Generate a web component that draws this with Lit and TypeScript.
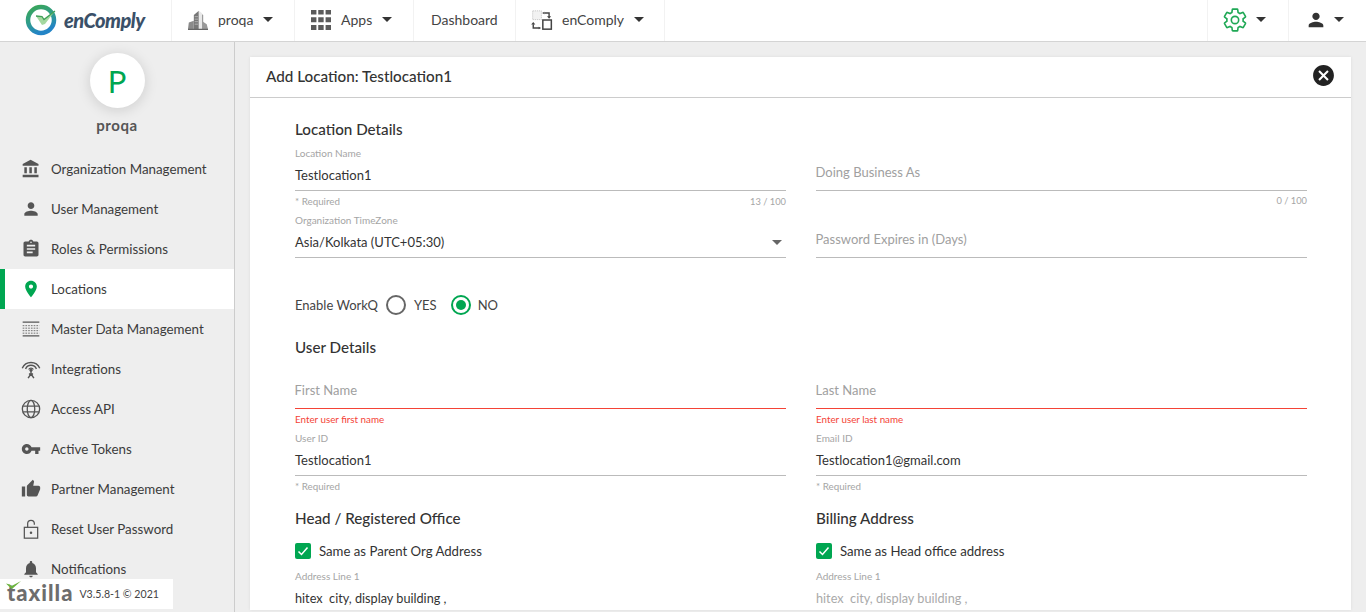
import { LitElement, html, css, svg } from "lit";
import { customElement } from "lit/decorators.js";
import { classMap } from "lit/directives/class-map.js";

const icon = (d: unknown, size = 20, vb = "0 0 24 24") =>
  html`<svg width=${size} height=${size} viewBox=${vb} fill="currentColor">${d}</svg>`;

const paths: Record<string, unknown> = {
  bank: svg`<path d="M4 10v7h3v-7H4zm6 0v7h3v-7h-3zM2 22h19v-3H2v3zm14-12v7h3v-7h-3zm-4.500-9L2 6v2h19V6l-9.500-5z"/>`,
  person: svg`<path d="M12 12c2.210 0 4-1.790 4-4s-1.790-4-4-4-4 1.790-4 4 1.790 4 4 4zm0 2c-2.670 0-8 1.340-8 4v2h16v-2c0-2.660-5.330-4-8-4z"/>`,
  roles: svg`<path d="M19 3h-4.180C14.400 1.840 13.300 1 12 1c-1.300 0-2.400.840-2.820 2H5c-1.100 0-2 .900-2 2v14c0 1.100.900 2 2 2h14c1.100 0 2-.900 2-2V5c0-1.100-.900-2-2-2zm-7 0c.550 0 1 .450 1 1s-.450 1-1 1-1-.450-1-1 .450-1 1-1zm2 14H7v-2h7v2zm3-4H7v-2h10v2zm0-4H7V7h10v2z"/>`,
  place: svg`<path d="M12 2C8.130 2 5 5.130 5 9c0 5.250 7 13 7 13s7-7.750 7-13c0-3.870-3.130-7-7-7zm0 9.500c-1.380 0-2.500-1.120-2.500-2.500s1.120-2.500 2.500-2.500 2.500 1.120 2.500 2.500-1.120 2.500-2.500 2.500z"/>`,
  master: svg`<path d="M2 3h20v1.400H2zM2 19.600h20V21H2z"/><path d="M2 8h20M2 11h20M2 14h20M2 17h20" stroke="currentColor" stroke-width="1.200" stroke-dasharray="2 1.300" fill="none" opacity="0.800"/>`,
  signal: svg`<g fill="none" stroke="currentColor" stroke-width="1.700"><path d="M1.500 11a11.500 11.500 0 0 1 21 0"/><path d="M5.500 12a7 7 0 0 1 13 0"/><path d="M9.200 12.600a3.200 3.200 0 0 1 5.600 0"/><path d="M12 14v4.500M12 18l-3.500 5M12 18l3.500 5M9.500 18h5"/></g><circle cx="12" cy="13.500" r="1.800"/>`,
  globe: svg`<g fill="none" stroke="currentColor" stroke-width="1.600"><circle cx="12" cy="12" r="10.400"/><ellipse cx="12" cy="12" rx="4.500" ry="10.400"/><path d="M2.500 8.600h19M2.500 15.400h19"/></g>`,
  key: svg`<path d="M12.650 10C11.830 7.670 9.610 6 7 6c-3.310 0-6 2.690-6 6s2.690 6 6 6c2.610 0 4.830-1.670 5.650-4H17v4h4v-4h2v-4H12.650zM7 14c-1.100 0-2-.900-2-2s.900-2 2-2 2 .900 2 2-.900 2-2 2z"/>`,
  thumb: svg`<path d="M1 21h4V9H1v12zm22-11c0-1.100-.900-2-2-2h-6.310l.950-4.570.030-.320c0-.410-.170-.790-.440-1.060L14.170 1 7.590 7.590C7.220 7.950 7 8.450 7 9v10c0 1.100.900 2 2 2h9c.830 0 1.540-.500 1.840-1.220l3.020-7.050c.090-.230.140-.470.140-.730v-2z"/>`,
  lock: svg`<g fill="none" stroke="currentColor" stroke-width="1.500"><rect x="4" y="10" width="16" height="13"/><path d="M8 10V5.500a4 4 0 0 1 8 0V7"/></g><circle cx="12" cy="16.500" r="1.500"/>`,
  bell: svg`<path d="M12 22c1.100 0 2-.900 2-2h-4c0 1.100.900 2 2 2zm6-6v-5c0-3.070-1.630-5.640-4.500-6.320V4c0-.830-.670-1.500-1.500-1.500s-1.500.670-1.500 1.500v.680C7.640 5.360 6 7.920 6 11v5l-2 2v1h16v-1l-2-2z"/>`,
  close: svg`<path d="M12 2C6.470 2 2 6.470 2 12s4.470 10 10 10 10-4.470 10-10S17.530 2 12 2zm5 13.590L15.590 17 12 13.410 8.410 17 7 15.590 10.590 12 7 8.410 8.410 7 12 10.590 15.590 7 17 8.410 13.410 12 17 15.590z"/>`,
  gear: svg`<g fill="none" stroke="currentColor" stroke-width="1.500"><path d="M19.430 12.980c.040-.320.070-.640.070-.980s-.030-.660-.070-.980l2.110-1.650c.190-.150.240-.420.120-.640l-2-3.460c-.120-.220-.390-.300-.610-.220l-2.490 1c-.520-.400-1.080-.730-1.690-.980l-.380-2.650C14.460 2.180 14.250 2 14 2h-4c-.250 0-.460.180-.490.420l-.380 2.650c-.610.250-1.170.590-1.690.980l-2.490-1c-.230-.090-.490 0-.610.220l-2 3.460c-.130.220-.070.490.120.640l2.110 1.650c-.040.320-.070.650-.070.980s.030.660.070.980l-2.110 1.650c-.190.150-.240.420-.120.640l2 3.460c.120.220.390.300.610.220l2.490-1c.520.400 1.080.730 1.690.980l.380 2.650c.030.240.240.420.490.420h4c.250 0 .460-.180.490-.420l.380-2.650c.610-.250 1.170-.590 1.690-.980l2.490 1c.230.090.490 0 .610-.220l2-3.460c.120-.220.070-.490-.120-.640l-2.110-1.650z"/><circle cx="12" cy="12" r="3.400"/></g>`,
  grid: svg`<path fill="#5a5a5a" d="M0 0h6.500v5.500H0zM8.700 0h6.500v5.500H8.700zM17.500 0H24v5.500h-6.500zM0 8.800h6.500v6H0zM8.700 8.800h6.500v6H8.700zM17.500 8.800H24v6h-6.500zM0 18h6.500v6H0zM8.700 18h6.500v6H8.700zM17.500 18H24v6h-6.500z"/>`,
  building: svg`<path d="M7 6l6-5v22H7z" fill="#777"/><path d="M8 8h4M8 11h4M8 14h4M8 17h4" stroke="#ccc" stroke-width="0.800"/><path d="M13 1l4 3v19h-4z" fill="#e8e8e8"/><path d="M17 5l1.200 1v17H17z" fill="#888"/><path d="M1 15l6-2v10H0z" fill="#8a8a8a"/><path d="M18 14l4.500 3 1.500 6h-6z" fill="#999"/><path d="M0 22.500h24V24H0z" fill="#666"/>`,
  swap: svg`<rect x="0.800" y="1" width="10.500" height="10.500" fill="#f2f2f2" stroke="#bbb" stroke-width="0.900" stroke-dasharray="1.500 1"/><rect x="13" y="12" width="10.200" height="11" fill="none" stroke="#444" stroke-width="1.800"/><path d="M15 3.500h5.500v5" fill="none" stroke="#444" stroke-width="1.700"/><path d="M18 7.500l2.500 3 2.500-3zM15 2l-3 1.500 3 1.500z" fill="#444"/><path d="M9 21.500H1.500v-4.500" fill="none" stroke="#444" stroke-width="1.700"/><path d="M-1 17.500l2.500-3 2.500 3zM8 20l3 1.500-3 1.500z" fill="#444"/>`,
};

const navItems = [
  ["bank", "Organization Management"],
  ["person", "User Management"],
  ["roles", "Roles & Permissions"],
  ["place", "Locations"],
  ["master", "Master Data Management"],
  ["signal", "Integrations"],
  ["globe", "Access API"],
  ["key", "Active Tokens"],
  ["thumb", "Partner Management"],
  ["lock", "Reset User Password"],
  ["bell", "Notifications"],
];

@customElement("app-root")
export class AppRoot extends LitElement {
  static styles = css`
    :host {
      display: block;
      height: 612px;
      overflow: hidden;
      background: #eeeeee;
      font-family: Lato, "Open Sans", sans-serif;
      font-size: 13px;
      color: #333;
    }
    * { box-sizing: border-box; }
    svg { display: block; flex: none; overflow: visible; }

    .topbar {
      display: flex;
      height: 42px;
      background: #fff;
      border-bottom: 1px solid #d4d4d4;
      font-size: 14px;
    }
    .brand {
      width: 171px;
      display: flex;
      align-items: center;
      padding-left: 24px;
      padding-bottom: 1px;
      gap: 6px;
    }
    .brand-name {
      font-size: 20px;
      font-weight: 900;
      font-style: italic;
      color: #3a5068;
      letter-spacing: -0.5px;
    }
    .cell {
      display: flex;
      align-items: center;
      padding-bottom: 2px;
      border-left: 1px solid #f2f2f2;
      color: #444;
    }
    .cell.org { width: 123px; padding-left: 16px; gap: 10px; }
    .cell.apps { width: 119px; padding-left: 16px; gap: 10px; }
    .cell.dash { width: 102px; padding-left: 17px; }
    .cell.prod { width: 150px; padding-left: 16px; gap: 10px; border-right: 1px solid #f2f2f2; }
    .cell.gear { margin-left: auto; width: 81px; padding-left: 14px; gap: 8px; color: #1fa855; }
    .cell.user { width: 78px; padding-left: 16px; gap: 7px; color: #333; }
    .caret {
      width: 0;
      height: 0;
      border-left: 5px solid transparent;
      border-right: 5px solid transparent;
      border-top: 5px solid #333;
    }

    .page { display: flex; height: 570px; }

    .sidebar {
      position: relative;
      width: 235px;
      flex: none;
      overflow: hidden;
      border-right: 1px solid #ccc;
    }
    .profile {
      display: flex;
      flex-direction: column;
      align-items: center;
      padding-top: 11px;
      height: 107px;
    }
    .avatar {
      width: 55px;
      height: 55px;
      border-radius: 50%;
      background: #fff;
      box-shadow: 0 2px 14px rgba(0, 0, 0, 0.14);
      color: #00a651;
      font-size: 31px;
      font-weight: 400;
      display: flex;
      align-items: center;
      justify-content: center;
    }
    .org-name {
      margin-top: 8px;
      font-size: 15px;
      font-weight: 700;
      color: #555;
      letter-spacing: 0.6px;
    }
    .nav-item {
      display: flex;
      align-items: center;
      height: 40px;
      padding-left: 21px;
      gap: 10px;
      font-size: 13.350px;
      color: #3c3c3c;
    }
    .nav-item .ico { color: #555; width: 20px; display: flex; justify-content: center; }
    .nav-item .lbl { margin-bottom: 1px; }
    .nav-item.active {
      background: #fff;
      box-shadow: inset 5px 0 0 #00a651;
    }
    .nav-item.active .ico { color: #00a651; }
    .stamp {
      position: absolute;
      left: 0;
      bottom: 3px;
      width: 173px;
      height: 30px;
      background: #fff;
      display: flex;
      align-items: center;
      padding-left: 7px;
      gap: 6px;
    }
    .stamp-logo {
      position: relative;
      font-size: 22px;
      font-weight: 900;
      color: #6d6d6d;
      letter-spacing: 1px;
      line-height: 22px;
      margin-top: -2px;
    }
    .stamp-logo svg { position: absolute; left: -1px; top: -1px; }
    .stamp-ver { font-size: 10.600px; color: #444; }

    .panel {
      margin: 15px 15px 2px;
      flex: 1;
      background: #fff;
      overflow: hidden;
      box-shadow: 0 0 3px rgba(0, 0, 0, 0.08);
    }
    .panel-head {
      height: 41px;
      border-bottom: 1px solid #ccc;
      display: flex;
      align-items: center;
      justify-content: space-between;
      padding: 0 16px 3px;
      font-size: 15.250px;
      font-weight: 500;
      color: #333;
    }
    .panel-head .x { color: #222; margin-right: -1px; }

    .form {
      display: grid;
      grid-template-columns: 491px 491px;
      column-gap: 30px;
      padding: 21px 45px 0;
    }
    .title {
      height: 20px;
      line-height: 20px;
      font-size: 15.200px;
      font-weight: 500;
      color: #333;
    }
    .full { grid-column: 1 / -1; }
    .mb9 { margin-bottom: 9px; }
    .mt20 { margin-top: 20px; }
    .mt8 { margin-top: 8px; }

    .field { height: 67px; }
    .label {
      height: 12px;
      line-height: 10px;
      font-size: 10px;
      color: #a5a5a5;
    }
    .control {
      position: relative;
      height: 31px;
      border-bottom: 1px solid #bbb;
      display: flex;
      align-items: center;
      justify-content: space-between;
      color: #333;
    }
    .control.bad { border-bottom: 1px solid #f44336; }
    .control .val { white-space: pre; margin-bottom: 1px; }
    .control .ph { color: #a0a0a0; position: relative; top: -3px; margin-left: -0.500px; }
    .hints {
      display: flex;
      justify-content: space-between;
      align-items: baseline;
      margin-top: 4px;
      height: 12px;
      line-height: 12px;
      font-size: 9.800px;
      color: #a5a5a5;
    }
    .hints .count { font-size: 9.300px; }
    .field.err .hints { color: #f44336; }
    .dim { color: #aaa; }
    .arrow {
      width: 0;
      height: 0;
      margin-right: 4px;
      border-left: 5px solid transparent;
      border-right: 5px solid transparent;
      border-top: 5px solid #666;
    }

    .radios {
      grid-column: 1 / -1;
      display: flex;
      align-items: center;
      height: 24px;
      margin-top: 11px;
      color: #444;
    }
    .radio {
      width: 20px;
      height: 20px;
      border-radius: 50%;
      border: 2px solid #666;
      margin: 0 8px;
      display: flex;
      align-items: center;
      justify-content: center;
    }
    .radio.on { border-color: #00a651; margin-left: 14px; margin-right: 7px; }
    .radio.on::after {
      content: "";
      width: 10px;
      height: 10px;
      border-radius: 50%;
      background: #00a651;
    }

    .check-row {
      display: flex;
      align-items: center;
      gap: 8px;
      height: 20px;
      margin-top: 13px;
      font-size: 13.200px;
      color: #333;
    }
    .box {
      width: 16px;
      height: 16px;
      border-radius: 2px;
      background: #00a651;
      display: flex;
      align-items: center;
      justify-content: center;
    }
    .after-check { margin-top: 10px; }
    .after-check .val { font-size: 12.700px; }
  `;

  private field(opts: {
    label?: string;
    value?: string;
    ph?: string;
    hint?: string;
    count?: string;
    err?: boolean;
    select?: boolean;
    dim?: boolean;
    extra?: string;
  }) {
    return html`<div class=${classMap({ field: true, err: !!opts.err, [opts.extra ?? "plain"]: true })}>
      <div class="label">${opts.label ?? ""}</div>
      <div class=${classMap({ control: true, bad: !!opts.err })}>
        ${opts.ph
          ? html`<span class="ph">${opts.ph}</span>`
          : html`<span class=${classMap({ val: true, dim: !!opts.dim })}>${opts.value}</span>`}
        ${opts.select ? html`<span class="arrow"></span>` : ""}
      </div>
      <div class="hints"><span>${opts.hint ?? ""}</span><span class="count">${opts.count ?? ""}</span></div>
    </div>`;
  }

  private checkRow(text: string) {
    return html`<div class="check-row">
      <span class="box">
        <svg width="12" height="12" viewBox="0 0 12 12" fill="none" stroke="#fff" stroke-width="1.500"><path d="M1.500 6.500l3 3 6-7"/></svg>
      </span>
      <span>${text}</span>
    </div>`;
  }

  render() {
    return html`
      <div class="topbar">
        <div class="brand">
          <svg width="34" height="32" viewBox="0 0 34 32" fill="none">
            <defs>
              <linearGradient id="ring" x1="0" y1="0" x2="0.400" y2="1">
                <stop offset="0" stop-color="#3aa655" />
                <stop offset="0.550" stop-color="#2f9c8c" />
                <stop offset="1" stop-color="#2384c6" />
              </linearGradient>
            </defs>
            <circle cx="17" cy="16" r="13" stroke="url(#ring)" stroke-width="4.500" />
            <path d="M12 12l6 .500 2 2.500 11-8-10 13-3 1z" fill="#a5d8a0" />
            <path d="M12 12l6 .500 2 3 11-8.500" stroke="#3f9f58" stroke-width="1.300" />
          </svg>
          <span class="brand-name">enComply</span>
        </div>
        <div class="cell org">${icon(paths.building, 20)}<span>proqa</span><span class="caret"></span></div>
        <div class="cell apps">${icon(paths.grid, 20)}<span>Apps</span><span class="caret"></span></div>
        <div class="cell dash"><span>Dashboard</span></div>
        <div class="cell prod">${icon(paths.swap, 20)}<span>enComply</span><span class="caret"></span></div>
        <div class="cell gear">${icon(paths.gear, 26)}<span class="caret"></span></div>
        <div class="cell user">${icon(paths.person, 22)}<span class="caret"></span></div>
      </div>
      <div class="page">
        <aside class="sidebar">
          <div class="profile">
            <div class="avatar">P</div>
            <div class="org-name">proqa</div>
          </div>
          ${navItems.map(
            ([ic, label]) => html`<div class=${classMap({ "nav-item": true, active: label === "Locations" })}>
              <span class="ico">${icon(paths[ic], 20)}</span><span class="lbl">${label}</span>
            </div>`
          )}
          <div class="stamp">
            <span class="stamp-logo">taxilla
              <svg width="16" height="8" viewBox="0 0 16 8"><path d="M0 2.500l4 1 1.500 1.500L15 0 6 8 3.500 6z" fill="#6cb33f"/></svg>
            </span>
            <span class="stamp-ver">V3.5.8-1 © 2021</span>
          </div>
        </aside>
        <main class="panel">
          <div class="panel-head">
            <span>Add Location: Testlocation1</span>
            <span class="x">${icon(paths.close, 25)}</span>
          </div>
          <div class="form">
            <div class="title full mb9">Location Details</div>
            ${this.field({ label: "Location Name", value: "Testlocation1", hint: "* Required", count: "13 / 100" })}
            ${this.field({ ph: "Doing Business As", count: "0 / 100" })}
            ${this.field({ label: "Organization TimeZone", value: "Asia/Kolkata (UTC+05:30)", select: true })}
            ${this.field({ ph: "Password Expires in (Days)" })}
            <div class="radios">
              <span>Enable WorkQ</span>
              <span class="radio"></span><span>YES</span>
              <span class="radio on"></span><span>NO</span>
            </div>
            <div class="title full mt20 mb9">User Details</div>
            ${this.field({ ph: "First Name", hint: "Enter user first name", err: true })}
            ${this.field({ ph: "Last Name", hint: "Enter user last name", err: true })}
            ${this.field({ label: "User ID", value: "Testlocation1", hint: "* Required" })}
            ${this.field({ label: "Email ID", value: "Testlocation1@gmail.com", hint: "* Required" })}
            <div class="title mt8">Head / Registered Office</div>
            <div class="title mt8">Billing Address</div>
            ${this.checkRow("Same as Parent Org Address")}
            ${this.checkRow("Same as Head office address")}
            ${this.field({ label: "Address Line 1", value: "hitex  city, display building ,", extra: "after-check" })}
            ${this.field({ label: "Address Line 1", value: "hitex  city, display building ,", dim: true, extra: "after-check" })}
          </div>
        </main>
      </div>
    `;
  }
}
